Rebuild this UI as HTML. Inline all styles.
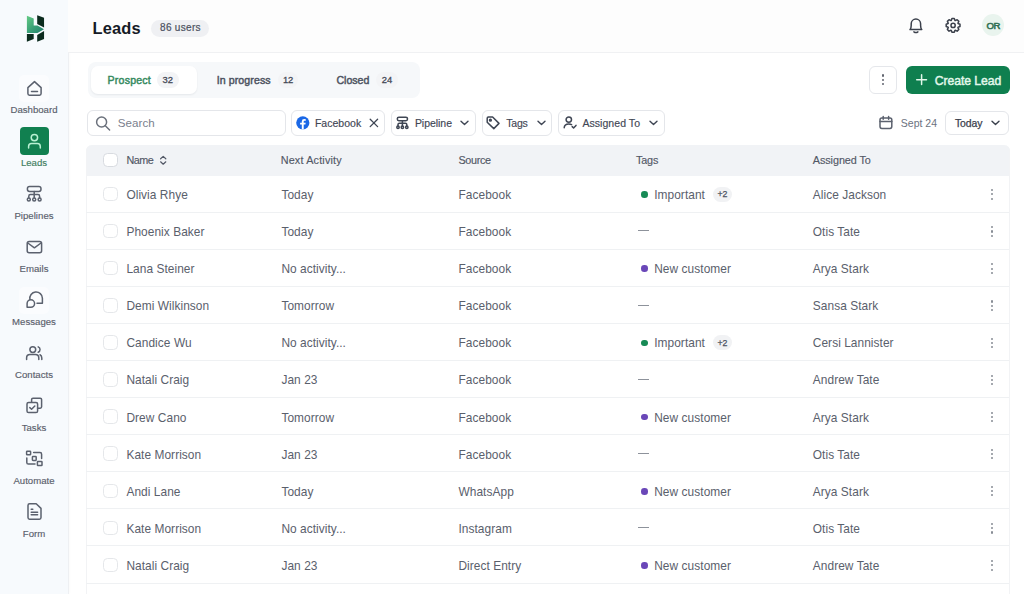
<!DOCTYPE html><html><head><meta charset="utf-8"><style>
*{box-sizing:border-box;margin:0;padding:0}
html,body{width:1024px;height:594px;overflow:hidden;background:#fff;font-family:"Liberation Sans",sans-serif;}
.abs{position:absolute}
.t{position:absolute;white-space:nowrap;line-height:1}
#side{position:absolute;left:0;top:0;width:69px;height:594px;background:#f7fafd;border-right:1px solid #eef0f3;box-shadow:0 0 3px rgba(20,30,50,.035)}
.navbg{position:absolute;left:19px;width:30px;height:27px;border-radius:5px;background:#fbfcfe}
#hdr{position:absolute;left:68px;top:0;width:956px;height:53px;background:#fdfdfd;border-bottom:1px solid #f0f1f3}
.chip{position:absolute;top:110px;height:25.5px;border:1px solid #e4e6ea;border-radius:6px;background:#fff}
.cb{position:absolute;left:103px;width:15px;height:14.5px;border:1px solid #e5e7ea;border-radius:4.5px;background:#fff}
.rowb{position:absolute;left:86px;width:923px;border-bottom:1px solid #eff1f3}
.dot{position:absolute;width:6.5px;height:6.5px;border-radius:50%}
.kd{position:absolute;left:990.6px;width:2.1px;height:2.1px;border-radius:50%;background:#878c95}
.pill{position:absolute;border-radius:9px;background:#f0f1f4}
</style></head><body>
<div id="side"></div>
<svg class="abs" style="left:0;top:0" width="68" height="60" viewBox="0 0 68 60">
<defs><linearGradient id="lg" x1="26" y1="15" x2="44" y2="33" gradientUnits="userSpaceOnUse"><stop offset="0" stop-color="#68cf86"/><stop offset="0.55" stop-color="#3aa077"/><stop offset="1" stop-color="#20806c"/></linearGradient></defs>
<polygon points="26.9,15.7 33.7,18.6 33.7,25.5 37.5,25.5 44,29.2 37.5,33 26.9,33" fill="url(#lg)"/>
<polygon points="37.2,15.15 44.05,17.7 44.05,27.5 37.2,23.9" fill="#0b2b1e"/>
<polygon points="44.05,31.1 44.05,38.9 37.2,41.8 37.2,34.9" fill="#0b2b1e"/>
<polygon points="26.9,34.1 33.7,34.1 33.7,38.9 26.9,41.8" fill="#0b2b1e"/>
</svg>
<div class="navbg" style="top:74.5px"></div>
<div class="t" style="left:0px;top:105.17px;font-size:9.6px;font-weight:400;color:#5a606c;width:68px;text-align:center;letter-spacing:0.02px;-webkit-text-stroke:0.15px #5a606c">Dashboard</div>
<div class="abs" style="left:20px;top:127px;width:28.6px;height:28px;border-radius:4px;background:#118050"></div>
<div class="t" style="left:0px;top:158.17px;font-size:9.6px;font-weight:400;color:#3f7d5e;width:68px;text-align:center;letter-spacing:0.02px;-webkit-text-stroke:0.15px #3f7d5e">Leads</div>
<div class="t" style="left:0px;top:211.17px;font-size:9.6px;font-weight:400;color:#5a606c;width:68px;text-align:center;letter-spacing:0.02px;-webkit-text-stroke:0.15px #5a606c">Pipelines</div>
<div class="t" style="left:0px;top:264.17px;font-size:9.6px;font-weight:400;color:#5a606c;width:68px;text-align:center;letter-spacing:0.02px;-webkit-text-stroke:0.15px #5a606c">Emails</div>
<div class="navbg" style="top:286.5px"></div>
<div class="t" style="left:0px;top:317.17px;font-size:9.6px;font-weight:400;color:#5a606c;width:68px;text-align:center;letter-spacing:0.02px;-webkit-text-stroke:0.15px #5a606c">Messages</div>
<div class="t" style="left:0px;top:370.17px;font-size:9.6px;font-weight:400;color:#5a606c;width:68px;text-align:center;letter-spacing:0.02px;-webkit-text-stroke:0.15px #5a606c">Contacts</div>
<div class="t" style="left:0px;top:423.17px;font-size:9.6px;font-weight:400;color:#5a606c;width:68px;text-align:center;letter-spacing:0.02px;-webkit-text-stroke:0.15px #5a606c">Tasks</div>
<div class="t" style="left:0px;top:476.17px;font-size:9.6px;font-weight:400;color:#5a606c;width:68px;text-align:center;letter-spacing:0.02px;-webkit-text-stroke:0.15px #5a606c">Automate</div>
<div class="t" style="left:0px;top:529.17px;font-size:9.6px;font-weight:400;color:#5a606c;width:68px;text-align:center;letter-spacing:0.02px;-webkit-text-stroke:0.15px #5a606c">Form</div>
<svg class="abs" style="left:0;top:0" width="68" height="594" viewBox="0 0 68 594">
<g fill="none" stroke="#5b616e" stroke-width="1.5" stroke-linecap="round" stroke-linejoin="round">
<path d="M27.9,87.6 L34.5,81.6 L41.1,87.6 L41.1,93.6 Q41.1,95.2 39.5,95.2 L29.5,95.2 Q27.9,95.2 27.9,93.6 Z"/>
<path d="M31.5,91.6 H37.5"/>
</g>
<g fill="none" stroke="#b8f0d2" stroke-width="1.5" stroke-linecap="round">
<circle cx="34.4" cy="137.6" r="3.2"/>
<path d="M28.6,148 V146.5 Q28.6,143.6 31.5,143.6 H37.4 Q40.3,143.6 40.3,146.5 V148"/>
</g>
<g fill="none" stroke="#5b616e" stroke-width="1.5" stroke-linecap="round" stroke-linejoin="round">
<rect x="27.4" y="186.6" width="13.6" height="4.8" rx="2.2"/>
<path d="M34.2,191.4 V197.8"/>
<path d="M28.8,197.8 V196.2 Q28.8,194.6 30.4,194.6 H38 Q39.6,194.6 39.6,196.2 V197.8"/>
<circle cx="28.8" cy="199.6" r="1.5"/><circle cx="34.2" cy="199.6" r="1.5"/><circle cx="39.6" cy="199.6" r="1.5"/>
</g>
<g fill="none" stroke="#5b616e" stroke-width="1.5" stroke-linecap="round" stroke-linejoin="round">
<rect x="27.2" y="241.4" width="14.4" height="11.4" rx="2"/>
<path d="M27.8,243 L34.4,247.8 L41,243"/>
</g>
<g fill="none" stroke="#5b616e" stroke-width="1.5" stroke-linecap="round" stroke-linejoin="round">
<path d="M29.9,299.4 A6.3,6.3 0 1 1 42.4,298.2 V303.3 H37"/>
<path d="M27.1,307.3 V303.5 A3.75,3.75 0 1 1 30.85,307.3 Z"/>
</g>
<g fill="none" stroke="#5b616e" stroke-width="1.5" stroke-linecap="round" stroke-linejoin="round">
<circle cx="32.8" cy="349.6" r="2.9"/>
<path d="M38.2,346.9 A2.9,2.9 0 0 1 38.2,352.3"/>
<path d="M26.6,359.4 V358 Q26.6,354.6 30,354.6 H35.4 Q38.8,354.6 38.8,358 V359.4"/>
<path d="M40,354.8 Q41.8,355.6 41.8,358 V359.4"/>
</g>
<g fill="none" stroke="#5b616e" stroke-width="1.5" stroke-linecap="round" stroke-linejoin="round">
<path d="M31.6,402.2 V399.6 Q31.6,398.2 33,398.2 H40.2 Q41.6,398.2 41.6,399.6 V406.8 Q41.6,408.2 40.2,408.2 H37.6"/>
<rect x="27" y="402.4" width="10.6" height="10.2" rx="1.6"/>
<path d="M29.8,407.6 L31.6,409.2 L34.8,406"/>
</g>
<g fill="none" stroke="#5b616e" stroke-width="1.5" stroke-linecap="round" stroke-linejoin="round">
<rect x="26.6" y="451.2" width="4" height="3.6" rx="0.6"/>
<rect x="32.4" y="456.6" width="3.8" height="3.8" rx="0.6"/>
<rect x="37.4" y="461.4" width="4.6" height="4.2" rx="0.6"/>
<path d="M33.6,452.6 H40 Q41.6,452.6 41.6,454.2 V458.4"/>
<path d="M26.8,458 V462.4 Q26.8,464 28.4,464 H35"/>
</g>
<g fill="none" stroke="#5b616e" stroke-width="1.5" stroke-linecap="round" stroke-linejoin="round">
<path d="M29.6,503.8 H36.2 L41,508.4 V517.6 Q41,519.2 39.4,519.2 H29.6 Q28,519.2 28,517.6 V505.4 Q28,503.8 29.6,503.8 Z"/>
<path d="M31.2,509.2 H32.8 M31.2,512.2 H37.6 M31.2,514.8 H37.6"/>
</g>
</svg>
<div id="hdr"></div>
<div class="t" style="left:92.4px;top:20.12px;font-size:16.4px;font-weight:700;color:#151a26;letter-spacing:0.225px;">Leads</div>
<div class="abs" style="left:151px;top:19.5px;width:58px;height:17.2px;border-radius:9px;background:#eff0f3"></div>
<div class="t" style="left:160px;top:23.14px;font-size:10.0px;font-weight:400;color:#4b5160;letter-spacing:0.321px;-webkit-text-stroke:0.2px #4b5160">86 users</div>
<svg class="abs" style="left:900px;top:10px" width="120" height="34" viewBox="900 10 120 34"><g fill="none" stroke="#3b404b" stroke-width="1.5" stroke-linecap="round" stroke-linejoin="round">
<path d="M910,29.6 H921.8 Q920.6,28 920.6,25.4 V23.8 A4.7,4.7 0 0 0 911.2,23.8 V25.4 Q911.2,28 910,29.6 Z"/>
<path d="M913.9,31.9 Q915.9,33.3 917.9,31.9"/>
<circle cx="953.1" cy="25.4" r="2.1"/>
<path d="M951.23,20.44 L951.92,18.50 L954.28,18.50 L954.97,20.44 L955.29,20.57 L957.14,19.68 L958.82,21.36 L957.93,23.21 L958.06,23.53 L960.00,24.22 L960.00,26.58 L958.06,27.27 L957.93,27.59 L958.82,29.44 L957.14,31.12 L955.29,30.23 L954.97,30.36 L954.28,32.30 L951.92,32.30 L951.23,30.36 L950.91,30.23 L949.06,31.12 L947.38,29.44 L948.27,27.59 L948.14,27.27 L946.20,26.58 L946.20,24.22 L948.14,23.53 L948.27,23.21 L947.38,21.36 L949.06,19.68 L950.91,20.57 Z"/>
</g></svg>
<div class="abs" style="left:982px;top:14.4px;width:22px;height:22px;border-radius:50%;background:#e9f4ee"></div>
<div class="t" style="left:986.6px;top:21.47px;font-size:9.6px;font-weight:400;color:#2f6f52;letter-spacing:-0.600px;-webkit-text-stroke:0.55px #2f6f52">OR</div>
<div class="abs" style="left:88px;top:61.7px;width:331.5px;height:36px;border-radius:8px;background:#f6f8fa"></div>
<div class="abs" style="left:90.6px;top:65.8px;width:106px;height:28.2px;border-radius:7px;background:#fff;box-shadow:0 1px 2px rgba(16,24,40,.07)"></div>
<div class="t" style="left:107.6px;top:74.53px;font-size:10.6px;font-weight:400;color:#358a5e;letter-spacing:0.195px;-webkit-text-stroke:0.45px #358a5e">Prospect</div>
<div class="pill" style="left:156.6px;top:72.3px;width:22.4px;height:15.8px;border-radius:8px;background:#f3f4f6"></div>
<div class="t" style="left:156.6px;top:75.44px;font-size:9.4px;font-weight:400;color:#444a56;width:22.4px;text-align:center;-webkit-text-stroke:0.3px #444a56">32</div>
<div class="t" style="left:216.7px;top:74.53px;font-size:10.6px;font-weight:400;color:#4d5361;letter-spacing:0.097px;-webkit-text-stroke:0.45px #4d5361">In progress</div>
<div class="pill" style="left:278px;top:72.3px;width:20.2px;height:15.8px;border-radius:8px;background:#f3f4f6"></div>
<div class="t" style="left:278px;top:75.44px;font-size:9.4px;font-weight:400;color:#444a56;width:20.2px;text-align:center;-webkit-text-stroke:0.3px #444a56">12</div>
<div class="t" style="left:336.4px;top:74.53px;font-size:10.6px;font-weight:400;color:#4d5361;letter-spacing:0.001px;-webkit-text-stroke:0.45px #4d5361">Closed</div>
<div class="pill" style="left:375.7px;top:72.3px;width:22.5px;height:15.8px;border-radius:8px;background:#f3f4f6"></div>
<div class="t" style="left:375.7px;top:75.44px;font-size:9.4px;font-weight:400;color:#444a56;width:22.5px;text-align:center;-webkit-text-stroke:0.3px #444a56">24</div>
<div class="abs" style="left:868.6px;top:65.6px;width:28.9px;height:28.4px;border:1px solid #e5e7eb;border-radius:6px;background:#fff"></div>
<div class="abs" style="left:881.9px;top:74.35px;width:2.3px;height:2.3px;border-radius:50%;background:#60656f"></div>
<div class="abs" style="left:881.9px;top:78.65px;width:2.3px;height:2.3px;border-radius:50%;background:#60656f"></div>
<div class="abs" style="left:881.9px;top:82.95px;width:2.3px;height:2.3px;border-radius:50%;background:#60656f"></div>
<div class="abs" style="left:905.8px;top:65.6px;width:104.2px;height:28.4px;border-radius:6px;background:#0f7f4f"></div>
<svg class="abs" style="left:915px;top:73px" width="14" height="14" viewBox="0 0 14 14"><path d="M6.6,1.8 V11.6 M1.7,6.7 H11.5" stroke="#e2f8eb" stroke-width="1.5" stroke-linecap="round"/></svg>
<div class="t" style="left:934.7px;top:74.67px;font-size:12.2px;font-weight:400;color:#e2f8eb;letter-spacing:-0.045px;-webkit-text-stroke:0.45px #e2f8eb">Create Lead</div>
<div class="chip" style="left:86.5px;width:199.5px"></div>
<svg class="abs" style="left:94px;top:114px" width="18" height="18" viewBox="0 0 18 18"><g fill="none" stroke="#6b717c" stroke-width="1.5" stroke-linecap="round" stroke-linejoin="round"><circle cx="7.6" cy="8" r="5"/><path d="M11.3,11.8 L15.6,16"/></g></svg>
<div class="t" style="left:117.8px;top:117.18px;font-size:11.6px;font-weight:400;color:#7a808c;letter-spacing:0.049px;">Search</div>
<div class="chip" style="left:290.9px;width:94.3px"></div>
<svg class="abs" style="left:296.1px;top:116.1px" width="14" height="14" viewBox="0 0 14 14"><circle cx="6.8" cy="6.8" r="6.6" fill="#1b68e6"/><path d="M7.7,13.4 V8.6 H9.4 L9.7,6.7 H7.7 V5.6 Q7.7,4.8 8.6,4.8 H9.8 V3.2 Q9,3.05 8.2,3.05 Q5.8,3.05 5.8,5.4 V6.7 H4.1 V8.6 H5.8 V13.4 Z" fill="#fff"/></svg>
<div class="t" style="left:314.9px;top:117.91px;font-size:10.5px;font-weight:400;color:#3f4654;letter-spacing:0.027px;-webkit-text-stroke:0.15px #3f4654">Facebook</div>
<svg class="abs" style="left:368px;top:115px" width="12" height="16" viewBox="0 0 12 16"><path d="M2.2,4.2 L9.6,11.6 M9.6,4.2 L2.2,11.6" stroke="#3f4654" stroke-width="1.3" stroke-linecap="round"/></svg>
<div class="chip" style="left:390.5px;width:85.3px"></div>
<svg class="abs" style="left:394px;top:115px" width="16" height="16" viewBox="0 0 16 16"><g fill="none" stroke="#3f4654" stroke-width="1.5" stroke-linecap="round" stroke-linejoin="round" stroke-width="1.3">
<rect x="3.3" y="2.2" width="10.2" height="3.5" rx="1.6"/><path d="M8.4,5.7 V8.2"/><path d="M4,11.2 V9.6 Q4,8.2 5.4,8.2 H11.4 Q12.8,8.2 12.8,9.6 V11.2"/>
<circle cx="4" cy="12.3" r="1.2"/><circle cx="8.4" cy="12.3" r="1.2"/><circle cx="12.8" cy="12.3" r="1.2"/><path d="M8.4,8.2 V11.2"/></g></svg>
<div class="t" style="left:414.9px;top:117.91px;font-size:10.5px;font-weight:400;color:#3f4654;letter-spacing:-0.037px;-webkit-text-stroke:0.15px #3f4654">Pipeline</div>
<svg class="abs" style="left:460.3px;top:119.7px" width="9" height="6" viewBox="0 0 9 6"><path d="M1,1.2 L4.5,4.6 L8,1.2" fill="none" stroke="#3f4654" stroke-width="1.4" stroke-linecap="round" stroke-linejoin="round"/></svg>
<div class="chip" style="left:481.5px;width:70.7px"></div>
<svg class="abs" style="left:485px;top:115px" width="16" height="16" viewBox="0 0 16 16"><g fill="none" stroke="#3f4654" stroke-width="1.5" stroke-linecap="round" stroke-linejoin="round" stroke-width="1.3">
<path d="M2.2,3.2 Q2.2,2 3.4,2 H7.6 L14,8.4 L8.8,13.6 L2.2,7.2 Z"/><circle cx="5.4" cy="5.2" r="0.9"/></g></svg>
<div class="t" style="left:506.3px;top:117.91px;font-size:10.5px;font-weight:400;color:#3f4654;letter-spacing:-0.227px;-webkit-text-stroke:0.15px #3f4654">Tags</div>
<svg class="abs" style="left:536.9px;top:119.7px" width="9" height="6" viewBox="0 0 9 6"><path d="M1,1.2 L4.5,4.6 L8,1.2" fill="none" stroke="#3f4654" stroke-width="1.4" stroke-linecap="round" stroke-linejoin="round"/></svg>
<div class="chip" style="left:558px;width:106.5px"></div>
<svg class="abs" style="left:562px;top:115px" width="16" height="16" viewBox="0 0 16 16"><g fill="none" stroke="#3f4654" stroke-width="1.5" stroke-linecap="round" stroke-linejoin="round" stroke-width="1.3">
<circle cx="6.8" cy="4.6" r="2.7"/><path d="M2.2,12.8 Q2.4,9 6.8,9 Q8.6,9 9.6,9.6"/><path d="M10.2,11.6 L11.6,13 L14,10.4"/></g></svg>
<div class="t" style="left:582.4px;top:117.91px;font-size:10.5px;font-weight:400;color:#3f4654;letter-spacing:0.059px;-webkit-text-stroke:0.15px #3f4654">Assigned To</div>
<svg class="abs" style="left:649.3px;top:119.7px" width="9" height="6" viewBox="0 0 9 6"><path d="M1,1.2 L4.5,4.6 L8,1.2" fill="none" stroke="#3f4654" stroke-width="1.4" stroke-linecap="round" stroke-linejoin="round"/></svg>
<svg class="abs" style="left:878px;top:114px" width="16" height="17" viewBox="0 0 16 17"><g fill="none" stroke="#5b616e" stroke-width="1.5" stroke-linecap="round" stroke-linejoin="round">
<rect x="2" y="4" width="11.8" height="10.4" rx="1.8"/><path d="M2,7.6 H13.8 M5.2,2.6 V5.2 M10.6,2.6 V5.2"/></g></svg>
<div class="t" style="left:900.8px;top:117.91px;font-size:10.5px;font-weight:400;color:#6c7280;letter-spacing:0.000px;">Sept 24</div>
<div class="chip" style="left:945.4px;width:63.8px;top:110.6px;height:24.4px"></div>
<div class="t" style="left:955px;top:118.50px;font-size:10.4px;font-weight:400;color:#3a404c;letter-spacing:-0.088px;-webkit-text-stroke:0.25px #3a404c">Today</div>
<svg class="abs" style="left:991.2px;top:119.6px" width="9" height="6" viewBox="0 0 9 6"><path d="M1,1.2 L4.5,4.6 L8,1.2" fill="none" stroke="#3a404c" stroke-width="1.4" stroke-linecap="round" stroke-linejoin="round"/></svg>
<div class="abs" style="left:86px;top:144.5px;width:923.5px;height:31px;background:#f1f3f6;border-radius:6px 6px 0 0"></div>
<div class="abs" style="left:86px;top:144.5px;width:924px;height:460px;border-left:1px solid #f2f3f5;border-right:1px solid #f2f3f5;border-radius:6px 6px 0 0"></div>
<div class="cb" style="top:152.6px;border-color:#d8dbe0"></div>
<div class="t" style="left:126.4px;top:154.66px;font-size:10.8px;font-weight:400;color:#525866;letter-spacing:-0.503px;-webkit-text-stroke:0.15px #525866">Name</div>
<svg class="abs" style="left:159px;top:154.6px" width="9" height="11" viewBox="0 0 9 11"><path d="M1.6,3.8 L4.2,1.4 L6.8,3.8 M1.6,6.8 L4.2,9.2 L6.8,6.8" fill="none" stroke="#525866" stroke-width="1.2" stroke-linecap="round" stroke-linejoin="round"/></svg>
<div class="t" style="left:280.7px;top:154.66px;font-size:10.8px;font-weight:400;color:#525866;letter-spacing:0.182px;-webkit-text-stroke:0.15px #525866">Next Activity</div>
<div class="t" style="left:458.4px;top:154.66px;font-size:10.8px;font-weight:400;color:#525866;letter-spacing:-0.324px;-webkit-text-stroke:0.15px #525866">Source</div>
<div class="t" style="left:635.9px;top:154.66px;font-size:10.8px;font-weight:400;color:#525866;letter-spacing:-0.138px;-webkit-text-stroke:0.15px #525866">Tags</div>
<div class="t" style="left:812.8px;top:154.66px;font-size:10.8px;font-weight:400;color:#525866;letter-spacing:-0.064px;-webkit-text-stroke:0.15px #525866">Assigned To</div>
<div class="rowb" style="top:175.50px;height:37.10px"></div>
<div class="cb" style="top:186.70px"></div>
<div class="t" style="left:126.4px;top:189.93px;font-size:11.9px;font-weight:400;color:#5a606c;letter-spacing:0.061px;">Olivia Rhye</div>
<div class="t" style="left:281.4px;top:189.93px;font-size:11.9px;font-weight:400;color:#5a606c;letter-spacing:0.079px;">Today</div>
<div class="t" style="left:458.4px;top:189.93px;font-size:11.9px;font-weight:400;color:#5a606c;letter-spacing:0.075px;">Facebook</div>
<div class="dot" style="left:641.3px;top:191.25px;background:#178a55"></div>
<div class="t" style="left:654.2px;top:189.93px;font-size:11.9px;font-weight:400;color:#5a606c;letter-spacing:0.063px;">Important</div>
<div class="pill" style="left:713px;top:186.80px;width:19px;height:15px;border-radius:8px;background:#f1f2f4"></div>
<div class="t" style="left:713px;top:190.35px;font-size:8.8px;font-weight:400;color:#4b5160;width:19px;text-align:center;-webkit-text-stroke:0.25px #4b5160">+2</div>
<div class="t" style="left:812.8px;top:189.93px;font-size:11.9px;font-weight:400;color:#5a606c;letter-spacing:0.061px;">Alice Jackson</div>
<div class="kd" style="top:189.15px"></div>
<div class="kd" style="top:193.35px"></div>
<div class="kd" style="top:197.55px"></div>
<div class="rowb" style="top:212.60px;height:37.10px"></div>
<div class="cb" style="top:223.80px"></div>
<div class="t" style="left:126.4px;top:227.03px;font-size:11.9px;font-weight:400;color:#5a606c;letter-spacing:0.064px;">Phoenix Baker</div>
<div class="t" style="left:281.4px;top:227.03px;font-size:11.9px;font-weight:400;color:#5a606c;letter-spacing:0.079px;">Today</div>
<div class="t" style="left:458.4px;top:227.03px;font-size:11.9px;font-weight:400;color:#5a606c;letter-spacing:0.075px;">Facebook</div>
<div class="abs" style="left:638.4px;top:230.40px;width:10.4px;height:1.1px;background:#8d929b"></div>
<div class="t" style="left:812.8px;top:227.03px;font-size:11.9px;font-weight:400;color:#5a606c;letter-spacing:0.058px;">Otis Tate</div>
<div class="kd" style="top:226.25px"></div>
<div class="kd" style="top:230.45px"></div>
<div class="kd" style="top:234.65px"></div>
<div class="rowb" style="top:249.70px;height:37.10px"></div>
<div class="cb" style="top:260.90px"></div>
<div class="t" style="left:126.4px;top:264.13px;font-size:11.9px;font-weight:400;color:#5a606c;letter-spacing:0.061px;">Lana Steiner</div>
<div class="t" style="left:281.4px;top:264.13px;font-size:11.9px;font-weight:400;color:#5a606c;letter-spacing:0.049px;">No activity...</div>
<div class="t" style="left:458.4px;top:264.13px;font-size:11.9px;font-weight:400;color:#5a606c;letter-spacing:0.075px;">Facebook</div>
<div class="dot" style="left:641.3px;top:265.45px;background:#6a47b8"></div>
<div class="t" style="left:654.2px;top:264.13px;font-size:11.9px;font-weight:400;color:#5a606c;letter-spacing:0.069px;">New customer</div>
<div class="t" style="left:812.8px;top:264.13px;font-size:11.9px;font-weight:400;color:#5a606c;letter-spacing:0.062px;">Arya Stark</div>
<div class="kd" style="top:263.35px"></div>
<div class="kd" style="top:267.55px"></div>
<div class="kd" style="top:271.75px"></div>
<div class="rowb" style="top:286.80px;height:37.10px"></div>
<div class="cb" style="top:298.00px"></div>
<div class="t" style="left:126.4px;top:301.23px;font-size:11.9px;font-weight:400;color:#5a606c;letter-spacing:0.063px;">Demi Wilkinson</div>
<div class="t" style="left:281.4px;top:301.23px;font-size:11.9px;font-weight:400;color:#5a606c;letter-spacing:0.075px;">Tomorrow</div>
<div class="t" style="left:458.4px;top:301.23px;font-size:11.9px;font-weight:400;color:#5a606c;letter-spacing:0.075px;">Facebook</div>
<div class="abs" style="left:638.4px;top:304.60px;width:10.4px;height:1.1px;background:#8d929b"></div>
<div class="t" style="left:812.8px;top:301.23px;font-size:11.9px;font-weight:400;color:#5a606c;letter-spacing:0.065px;">Sansa Stark</div>
<div class="kd" style="top:300.45px"></div>
<div class="kd" style="top:304.65px"></div>
<div class="kd" style="top:308.85px"></div>
<div class="rowb" style="top:323.90px;height:37.10px"></div>
<div class="cb" style="top:335.10px"></div>
<div class="t" style="left:126.4px;top:338.33px;font-size:11.9px;font-weight:400;color:#5a606c;letter-spacing:0.072px;">Candice Wu</div>
<div class="t" style="left:281.4px;top:338.33px;font-size:11.9px;font-weight:400;color:#5a606c;letter-spacing:0.049px;">No activity...</div>
<div class="t" style="left:458.4px;top:338.33px;font-size:11.9px;font-weight:400;color:#5a606c;letter-spacing:0.075px;">Facebook</div>
<div class="dot" style="left:641.3px;top:339.65px;background:#178a55"></div>
<div class="t" style="left:654.2px;top:338.33px;font-size:11.9px;font-weight:400;color:#5a606c;letter-spacing:0.063px;">Important</div>
<div class="pill" style="left:713px;top:335.20px;width:19px;height:15px;border-radius:8px;background:#f1f2f4"></div>
<div class="t" style="left:713px;top:338.75px;font-size:8.8px;font-weight:400;color:#4b5160;width:19px;text-align:center;-webkit-text-stroke:0.25px #4b5160">+2</div>
<div class="t" style="left:812.8px;top:338.33px;font-size:11.9px;font-weight:400;color:#5a606c;letter-spacing:0.057px;">Cersi Lannister</div>
<div class="kd" style="top:337.55px"></div>
<div class="kd" style="top:341.75px"></div>
<div class="kd" style="top:345.95px"></div>
<div class="rowb" style="top:361.00px;height:37.10px"></div>
<div class="cb" style="top:372.20px"></div>
<div class="t" style="left:126.4px;top:375.43px;font-size:11.9px;font-weight:400;color:#5a606c;letter-spacing:0.057px;">Natali Craig</div>
<div class="t" style="left:281.4px;top:375.43px;font-size:11.9px;font-weight:400;color:#5a606c;letter-spacing:0.071px;">Jan 23</div>
<div class="t" style="left:458.4px;top:375.43px;font-size:11.9px;font-weight:400;color:#5a606c;letter-spacing:0.075px;">Facebook</div>
<div class="abs" style="left:638.4px;top:378.80px;width:10.4px;height:1.1px;background:#8d929b"></div>
<div class="t" style="left:812.8px;top:375.43px;font-size:11.9px;font-weight:400;color:#5a606c;letter-spacing:0.066px;">Andrew Tate</div>
<div class="kd" style="top:374.65px"></div>
<div class="kd" style="top:378.85px"></div>
<div class="kd" style="top:383.05px"></div>
<div class="rowb" style="top:398.10px;height:37.10px"></div>
<div class="cb" style="top:409.30px"></div>
<div class="t" style="left:126.4px;top:412.53px;font-size:11.9px;font-weight:400;color:#5a606c;letter-spacing:0.074px;">Drew Cano</div>
<div class="t" style="left:281.4px;top:412.53px;font-size:11.9px;font-weight:400;color:#5a606c;letter-spacing:0.075px;">Tomorrow</div>
<div class="t" style="left:458.4px;top:412.53px;font-size:11.9px;font-weight:400;color:#5a606c;letter-spacing:0.075px;">Facebook</div>
<div class="dot" style="left:641.3px;top:413.85px;background:#6a47b8"></div>
<div class="t" style="left:654.2px;top:412.53px;font-size:11.9px;font-weight:400;color:#5a606c;letter-spacing:0.069px;">New customer</div>
<div class="t" style="left:812.8px;top:412.53px;font-size:11.9px;font-weight:400;color:#5a606c;letter-spacing:0.062px;">Arya Stark</div>
<div class="kd" style="top:411.75px"></div>
<div class="kd" style="top:415.95px"></div>
<div class="kd" style="top:420.15px"></div>
<div class="rowb" style="top:435.20px;height:37.10px"></div>
<div class="cb" style="top:446.40px"></div>
<div class="t" style="left:126.4px;top:449.63px;font-size:11.9px;font-weight:400;color:#5a606c;letter-spacing:0.062px;">Kate Morrison</div>
<div class="t" style="left:281.4px;top:449.63px;font-size:11.9px;font-weight:400;color:#5a606c;letter-spacing:0.071px;">Jan 23</div>
<div class="t" style="left:458.4px;top:449.63px;font-size:11.9px;font-weight:400;color:#5a606c;letter-spacing:0.075px;">Facebook</div>
<div class="abs" style="left:638.4px;top:453.00px;width:10.4px;height:1.1px;background:#8d929b"></div>
<div class="t" style="left:812.8px;top:449.63px;font-size:11.9px;font-weight:400;color:#5a606c;letter-spacing:0.058px;">Otis Tate</div>
<div class="kd" style="top:448.85px"></div>
<div class="kd" style="top:453.05px"></div>
<div class="kd" style="top:457.25px"></div>
<div class="rowb" style="top:472.30px;height:37.10px"></div>
<div class="cb" style="top:483.50px"></div>
<div class="t" style="left:126.4px;top:486.73px;font-size:11.9px;font-weight:400;color:#5a606c;letter-spacing:0.067px;">Andi Lane</div>
<div class="t" style="left:281.4px;top:486.73px;font-size:11.9px;font-weight:400;color:#5a606c;letter-spacing:0.079px;">Today</div>
<div class="t" style="left:458.4px;top:486.73px;font-size:11.9px;font-weight:400;color:#5a606c;letter-spacing:0.078px;">WhatsApp</div>
<div class="dot" style="left:641.3px;top:488.05px;background:#6a47b8"></div>
<div class="t" style="left:654.2px;top:486.73px;font-size:11.9px;font-weight:400;color:#5a606c;letter-spacing:0.069px;">New customer</div>
<div class="t" style="left:812.8px;top:486.73px;font-size:11.9px;font-weight:400;color:#5a606c;letter-spacing:0.062px;">Arya Stark</div>
<div class="kd" style="top:485.95px"></div>
<div class="kd" style="top:490.15px"></div>
<div class="kd" style="top:494.35px"></div>
<div class="rowb" style="top:509.40px;height:37.10px"></div>
<div class="cb" style="top:520.60px"></div>
<div class="t" style="left:126.4px;top:523.83px;font-size:11.9px;font-weight:400;color:#5a606c;letter-spacing:0.062px;">Kate Morrison</div>
<div class="t" style="left:281.4px;top:523.83px;font-size:11.9px;font-weight:400;color:#5a606c;letter-spacing:0.049px;">No activity...</div>
<div class="t" style="left:458.4px;top:523.83px;font-size:11.9px;font-weight:400;color:#5a606c;letter-spacing:0.066px;">Instagram</div>
<div class="abs" style="left:638.4px;top:527.20px;width:10.4px;height:1.1px;background:#8d929b"></div>
<div class="t" style="left:812.8px;top:523.83px;font-size:11.9px;font-weight:400;color:#5a606c;letter-spacing:0.058px;">Otis Tate</div>
<div class="kd" style="top:523.05px"></div>
<div class="kd" style="top:527.25px"></div>
<div class="kd" style="top:531.45px"></div>
<div class="rowb" style="top:546.50px;height:37.10px"></div>
<div class="cb" style="top:557.70px"></div>
<div class="t" style="left:126.4px;top:560.93px;font-size:11.9px;font-weight:400;color:#5a606c;letter-spacing:0.057px;">Natali Craig</div>
<div class="t" style="left:281.4px;top:560.93px;font-size:11.9px;font-weight:400;color:#5a606c;letter-spacing:0.071px;">Jan 23</div>
<div class="t" style="left:458.4px;top:560.93px;font-size:11.9px;font-weight:400;color:#5a606c;letter-spacing:0.057px;">Direct Entry</div>
<div class="dot" style="left:641.3px;top:562.25px;background:#6a47b8"></div>
<div class="t" style="left:654.2px;top:560.93px;font-size:11.9px;font-weight:400;color:#5a606c;letter-spacing:0.069px;">New customer</div>
<div class="t" style="left:812.8px;top:560.93px;font-size:11.9px;font-weight:400;color:#5a606c;letter-spacing:0.066px;">Andrew Tate</div>
<div class="kd" style="top:560.15px"></div>
<div class="kd" style="top:564.35px"></div>
<div class="kd" style="top:568.55px"></div>
<div class="rowb" style="top:583.60px;height:37.10px"></div>
</body></html>
